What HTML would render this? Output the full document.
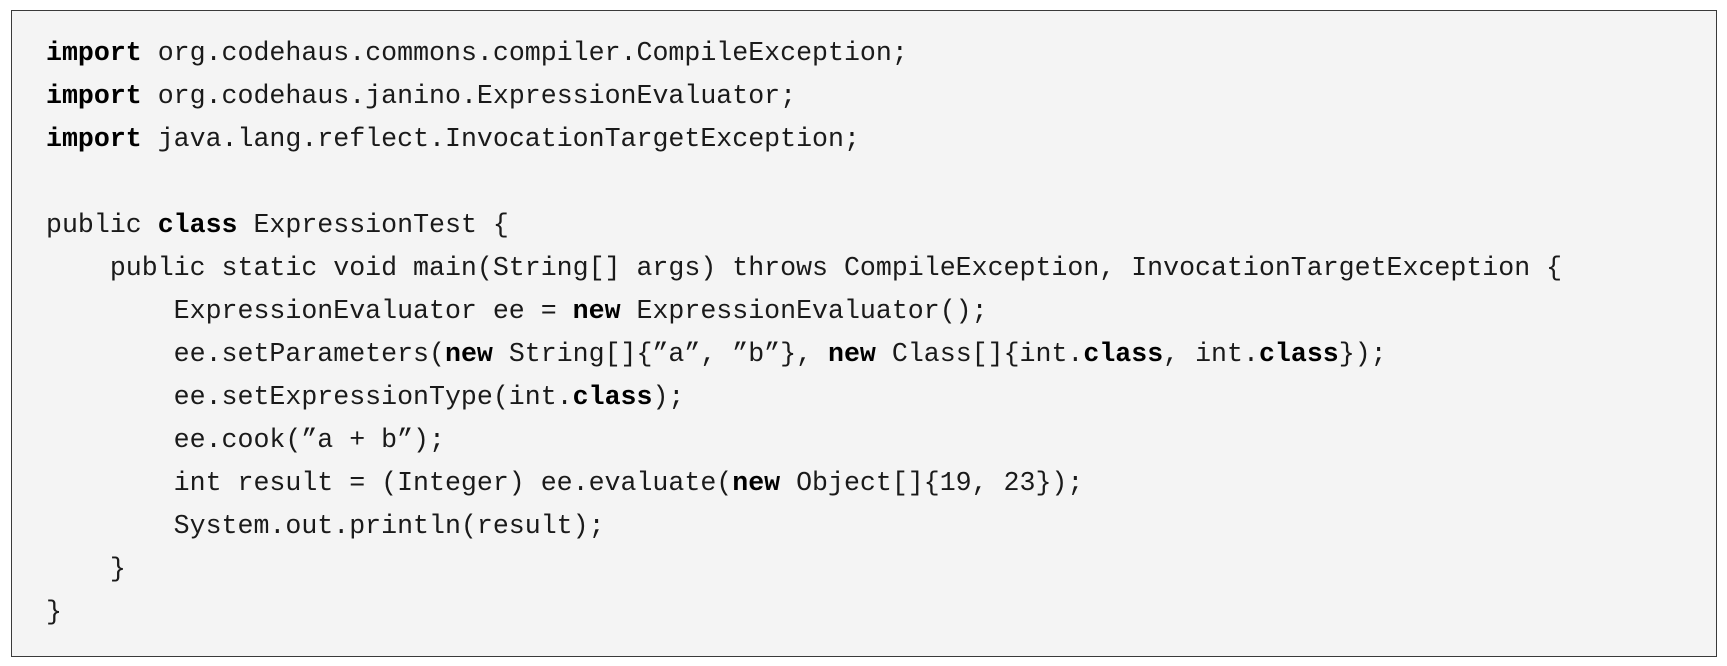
<!DOCTYPE html>
<html><head><meta charset="utf-8"><style>
html,body{margin:0;padding:0;background:#fff;width:1727px;height:666px;overflow:hidden}
.box{position:absolute;left:11px;top:10px;width:1704px;height:645px;background:#f4f4f4;border:1.5px solid #3a3a3a}
pre{position:absolute;left:46px;top:32px;margin:0;font-family:"Liberation Mono",monospace;font-size:26.6px;line-height:43px;color:#1a1a1a}
b{font-weight:bold;color:#000}
</style></head><body>
<div class="box"></div>
<pre><b>import</b> org.codehaus.commons.compiler.CompileException;
<b>import</b> org.codehaus.janino.ExpressionEvaluator;
<b>import</b> java.lang.reflect.InvocationTargetException;

public <b>class</b> ExpressionTest {
    public static void main(String[] args) throws CompileException, InvocationTargetException {
        ExpressionEvaluator ee = <b>new</b> ExpressionEvaluator();
        ee.setParameters(<b>new</b> String[]{”a”, ”b”}, <b>new</b> Class[]{int.<b>class</b>, int.<b>class</b>});
        ee.setExpressionType(int.<b>class</b>);
        ee.cook(”a + b”);
        int result = (Integer) ee.evaluate(<b>new</b> Object[]{19, 23});
        System.out.println(result);
    }
}</pre>
</body></html>
